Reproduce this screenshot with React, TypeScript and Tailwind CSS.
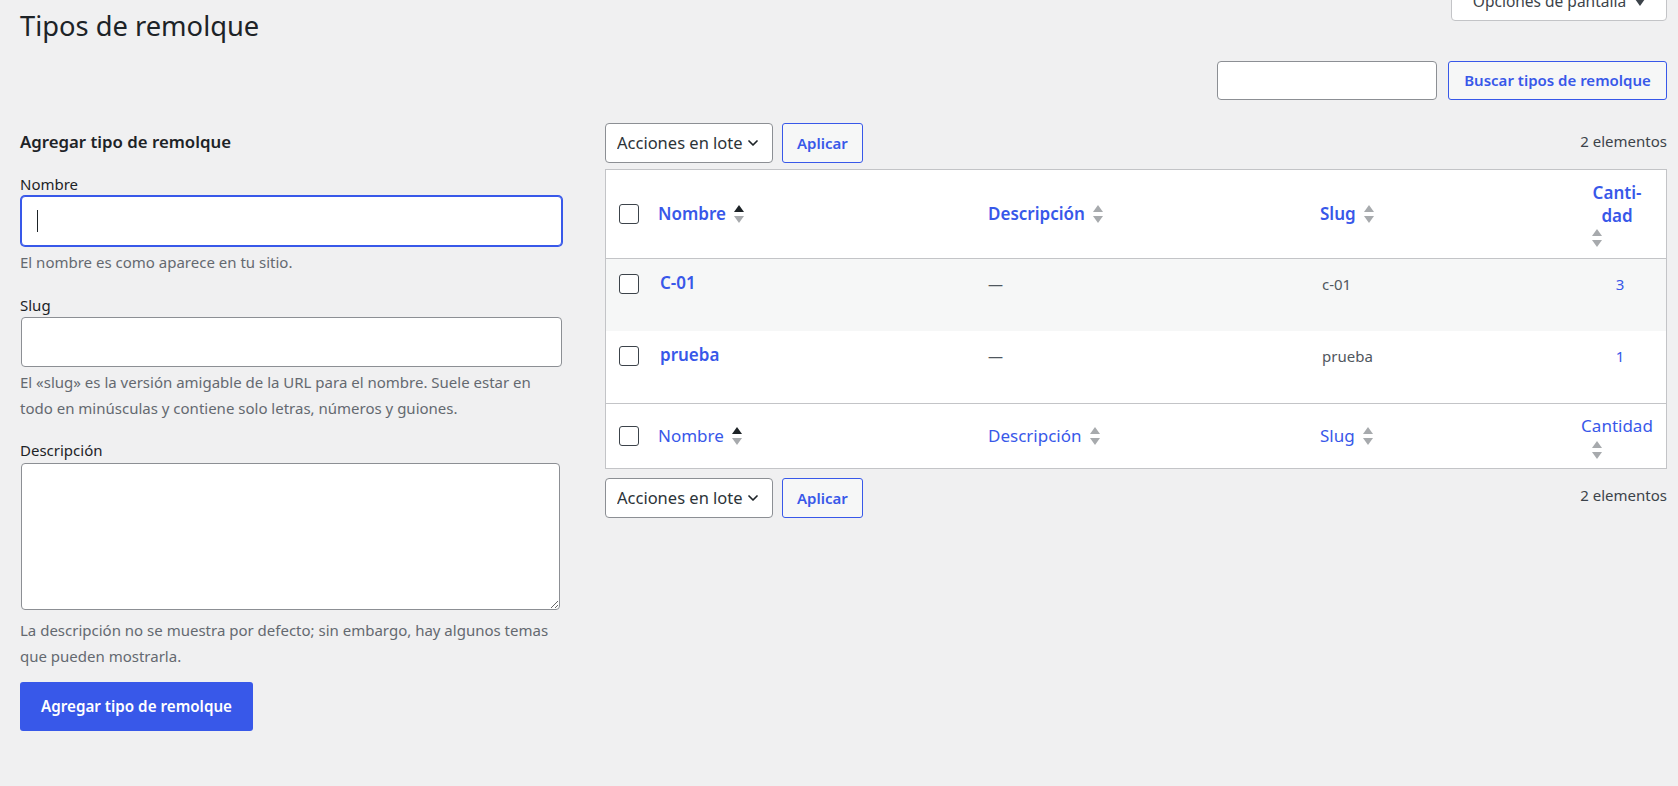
import { ChevronDown } from "lucide-react";

type SortProps = { active?: boolean };

// two stacked triangles used beside sortable column titles
const SortArrows = ({ active = false }: SortProps) => (
  <span className="inline-flex flex-col gap-[4px]">
    <svg width="10" height="7" viewBox="0 0 10 7">
      <path d="M5 0 L10 7 L0 7 Z" fill={active ? "#1d2327" : "#a7aaad"} />
    </svg>
    <svg width="10" height="7" viewBox="0 0 10 7">
      <path d="M0 0 L10 0 L5 7 Z" fill="#a7aaad" />
    </svg>
  </span>
);

const Checkbox = () => (
  <input
    type="checkbox"
    className="appearance-none w-[20px] h-[20px] border border-[#3c434a] rounded-[3px] bg-white block"
  />
);

const BulkActions = () => (
  <div className="flex items-center gap-[9px]">
    <div className="relative">
      <select className="appearance-none w-[168px] h-[40px] pl-[11px] pr-[28px] border border-[#8c8f94] rounded-[4px] bg-white text-[16.5px] text-[#2c3338]">
        <option>Acciones en lote</option>
      </select>
      <ChevronDown
        size={16}
        strokeWidth={2.6}
        className="absolute right-[12px] top-[12px] text-[#1d2327] pointer-events-none"
      />
    </div>
    <button className="h-[40px] px-[14px] border border-[#3858e9] rounded-[3px] bg-[#f6f7f7] text-[#3858e9] text-[15px] font-semibold">
      Aplicar
    </button>
  </div>
);

const rows = [
  { name: "C-01", slug: "c-01", count: 3 },
  { name: "prueba", slug: "prueba", count: 1 },
];

const gridCols = "grid grid-cols-[42px_330px_332px_258px_98px]";

const TermsTable = () => (
  <div className="border border-[#c3c4c7] bg-white mt-[6px]">
    <div className={`${gridCols} h-[89px] items-center border-b border-[#c3c4c7] text-[17px]`}>
      <div className="pl-[13px]"><Checkbox /></div>
      <div className="pl-[10px] flex items-center gap-[8px]">
        <a className="text-[#3858e9] font-semibold">Nombre</a>
        <SortArrows active />
      </div>
      <div className="pl-[10px] flex items-center gap-[8px]">
        <a className="text-[#3858e9] font-semibold">Descripción</a>
        <SortArrows />
      </div>
      <div className="pl-[10px] flex items-center gap-[8px]">
        <a className="text-[#3858e9] font-semibold">Slug</a>
        <SortArrows />
      </div>
      <div className="flex flex-col items-center">
        <a className="text-[#3858e9] font-semibold leading-[23px] text-center">
          Canti-<br />dad
        </a>
        <div className="self-start ml-[24px] mt-[2px] flex"><SortArrows /></div>
      </div>
    </div>

    {rows.map((row, i) => (
      <div
        key={row.slug}
        className={`${gridCols} h-[72px] items-start ${i === 0 ? "bg-[#f6f7f7]" : "bg-white"}`}
      >
        <div className="pl-[13px] pt-[15px]"><Checkbox /></div>
        <div className="pl-[12px] pt-[12px] leading-[24px] text-[17px]">
          <a className="text-[#3858e9] font-semibold">{row.name}</a>
        </div>
        <div className="pl-[10px] pt-[13px] leading-[24px] text-[#50575e]">—</div>
        <div className="pl-[12px] pt-[13px] leading-[24px] text-[#50575e]">{row.slug}</div>
        <div className="pt-[13px] leading-[24px] text-center pl-[6px]">
          <a className="text-[#3858e9]">{row.count}</a>
        </div>
      </div>
    ))}

    <div className={`${gridCols} h-[65px] items-center border-t border-[#c3c4c7] text-[17px]`}>
      <div className="pl-[13px]"><Checkbox /></div>
      <div className="pl-[10px] flex items-center gap-[8px]">
        <a className="text-[#3858e9]">Nombre</a>
        <SortArrows active />
      </div>
      <div className="pl-[10px] flex items-center gap-[8px]">
        <a className="text-[#3858e9]">Descripción</a>
        <SortArrows />
      </div>
      <div className="pl-[10px] flex items-center gap-[8px]">
        <a className="text-[#3858e9]">Slug</a>
        <SortArrows />
      </div>
      <div className="flex flex-col items-center">
        <a className="text-[#3858e9] leading-[24px]">Cantidad</a>
        <div className="self-start ml-[24px] mt-[3px] flex"><SortArrows /></div>
      </div>
    </div>
  </div>
);

const App = () => {
  return (
    <div className="min-h-screen bg-[#f0f0f1] text-[#1d2327] text-[15px] font-['Noto_Sans',sans-serif] pl-[20px] pr-[11px] overflow-hidden">
      <div className="flex justify-between items-start">
        <h1 className="mt-[8px] text-[27.3px] leading-[36px] font-normal">Tipos de remolque</h1>
        <button className="-mt-[17px] h-[38px] w-[216px] border border-[#c3c4c7] rounded-b-[4px] bg-white text-[#3c434a] text-[15.5px] flex items-center justify-center gap-[9px]">
          Opciones de pantalla
          <svg width="10" height="7" viewBox="0 0 10 7">
            <path d="M0 0 L10 0 L5 7 Z" fill="#3c434a" />
          </svg>
        </button>
      </div>

      <form className="flex justify-end gap-[11px] mt-[17px]">
        <input className="w-[220px] h-[39px] border border-[#8c8f94] rounded-[4px] bg-white px-[8px]" />
        <button
          type="button"
          className="w-[219px] h-[39px] border border-[#3858e9] rounded-[3px] bg-[#f6f7f7] text-[#3858e9] text-[15px] font-semibold"
        >
          Buscar tipos de remolque
        </button>
      </form>

      <div className="flex mt-[23px]">
        <div className="w-[543px] shrink-0">
          <h2 className="mt-[7px] text-[16.8px] leading-[24px] font-semibold">Agregar tipo de remolque</h2>

          <label className="block mt-[19px] leading-[22px]">Nombre</label>
          <div className="relative ml-[1px] mt-[1px] w-[541px]">
            <input className="w-full h-[50px] border border-[#3858e9] shadow-[0_0_0_1px_#3858e9] rounded-[4px] bg-white px-[15px] outline-none" />
            <span className="absolute left-[16px] top-[14px] w-[1px] h-[22px] bg-[#1d2327]" />
          </div>
          <p className="mt-[3px] leading-[26px] text-[#646970]">El nombre es como aparece en tu sitio.</p>

          <label className="block mt-[19px] leading-[22px]">Slug</label>
          <input className="mt-[1px] ml-[1px] w-[541px] h-[50px] border border-[#8c8f94] rounded-[4px] bg-white px-[15px]" />
          <p className="mt-[2px] leading-[26px] text-[#646970]">
            El «slug» es la versión amigable de la URL para el nombre. Suele estar en todo en minúsculas y contiene solo letras, números y guiones.
          </p>

          <label className="block mt-[18px] leading-[22px]">Descripción</label>
          <textarea className="block mt-[2px] ml-[1px] w-[539px] h-[147px] border border-[#8c8f94] rounded-[4px] bg-white resize" />
          <p className="mt-[7px] leading-[26px] text-[#646970]">
            La descripción no se muestra por defecto; sin embargo, hay algunos temas que pueden mostrarla.
          </p>

          <button className="mt-[13px] h-[49px] w-[233px] rounded-[3px] bg-[#3858e9] text-white text-[15.2px] font-semibold">
            Agregar tipo de remolque
          </button>
        </div>

        <div className="flex-1 ml-[42px]">
          <div className="flex justify-between items-center">
            <BulkActions />
            <span className="text-[#3c434a] -mt-[3px]">2 elementos</span>
          </div>
          <TermsTable />
          <div className="flex justify-between items-center mt-[9px]">
            <BulkActions />
            <span className="text-[#3c434a] -mt-[5px]">2 elementos</span>
          </div>
        </div>
      </div>
    </div>
  );
};

export default App;
